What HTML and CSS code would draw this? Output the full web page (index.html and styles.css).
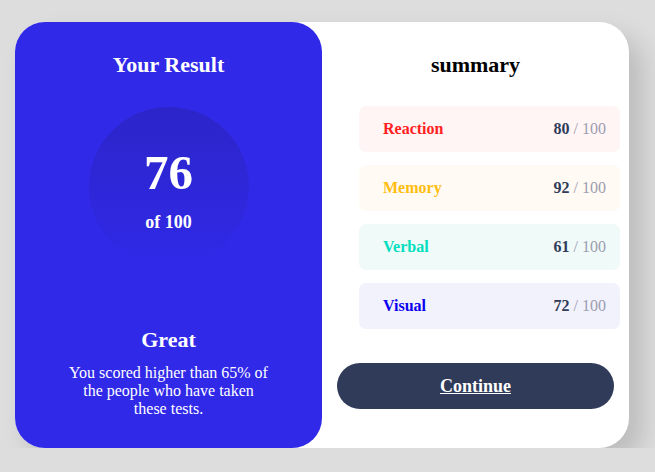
FILE: index.html
```html
<!DOCTYPE html>
<html lang="en">
<head>
<meta charset="utf-8">
<title>Results summary</title>
<link rel="stylesheet" href="styles.css">
</head>
<body>
<main class="card">
  <section class="result">
    <h1 class="result-title">Your Result</h1>
    <div class="score-circle">
      <span class="score-big">76</span>
      <span class="score-of">of 100</span>
    </div>
    <h2 class="verdict">Great</h2>
    <p class="verdict-text">You scored higher than 65% of the people who have taken these tests.</p>
  </section>
  <section class="summary">
    <h2 class="summary-title">summary</h2>
    <ul class="rows">
      <li class="row row-reaction"><span class="label">Reaction</span><span class="val"><b>80</b> / 100</span></li>
      <li class="row row-memory"><span class="label">Memory</span><span class="val"><b>92</b> / 100</span></li>
      <li class="row row-verbal"><span class="label">Verbal</span><span class="val"><b>61</b> / 100</span></li>
      <li class="row row-visual"><span class="label">Visual</span><span class="val"><b>72</b> / 100</span></li>
    </ul>
    <a class="continue" href="#">Continue</a>
  </section>
</main>
</body>
</html>
```
FILE: styles.css
```css
* { box-sizing: border-box; }
html, body { margin: 0; }
body {
  background: #dddddd;
  padding: 22px 0 0 15px;
  font-family: "Liberation Serif", "Times New Roman", serif;
}
.card {
  width: 614px;
  height: 426px;
  display: flex;
  background: #ffffff;
  border-radius: 30px;
  box-shadow: 14px 14px 26px rgba(0, 0, 0, 0.15);
}
.result {
  width: 307px;
  flex: none;
  background: #3029e8;
  border-radius: 30px;
  color: #ffffff;
  display: flex;
  flex-direction: column;
  align-items: center;
  padding-top: 30px;
}
.result-title {
  margin: 0;
  font-size: 22px;
  line-height: 26px;
  font-weight: bold;
}
.score-circle {
  margin-top: 29px;
  width: 160px;
  height: 160px;
  border-radius: 50%;
  background: linear-gradient(to bottom, #2c25c9, rgba(48, 41, 232, 0));
  display: flex;
  flex-direction: column;
  align-items: center;
  padding-top: 42px;
}
.score-big {
  font-size: 49px;
  line-height: 48px;
  font-weight: bold;
}
.score-of {
  margin-top: 15px;
  font-size: 18px;
  line-height: 20px;
  font-weight: bold;
}
.verdict {
  margin: 60px 0 0;
  font-size: 22px;
  line-height: 26px;
  font-weight: bold;
}
.verdict-text {
  margin: 11px 0 0;
  width: 202px;
  text-align: center;
  font-size: 16px;
  line-height: 18px;
}
.summary {
  flex: 1;
  display: flex;
  flex-direction: column;
  padding-top: 30px;
}
.summary-title {
  margin: 0;
  text-align: center;
  font-size: 22px;
  line-height: 26px;
  font-weight: bold;
  color: #000000;
}
.rows {
  list-style: none;
  margin: 28px 9px 0 37px;
  padding: 0;
  display: flex;
  flex-direction: column;
  gap: 13px;
}
.row {
  height: 46px;
  border-radius: 7px;
  display: flex;
  align-items: center;
  justify-content: space-between;
  padding: 0 14px 0 24px;
  font-size: 16px;
}
.label { font-weight: bold; }
.val { color: #9c9db0; }
.val b { color: #303b5a; }
.row-reaction { background: #fff5f5; }
.row-reaction .label { color: #ff1f1f; }
.row-memory { background: #fffaf3; }
.row-memory .label { color: #ffbe0f; }
.row-verbal { background: #f0faf8; }
.row-verbal .label { color: #00dfbe; }
.row-visual { background: #f2f2fd; }
.row-visual .label { color: #0b00f0; }
.continue {
  margin: 34px 15px 0;
  height: 46px;
  border-radius: 23px;
  background: #303a59;
  color: #ffffff;
  font-size: 18px;
  font-weight: bold;
  display: flex;
  align-items: center;
  justify-content: center;
  text-decoration: underline;
}
```
